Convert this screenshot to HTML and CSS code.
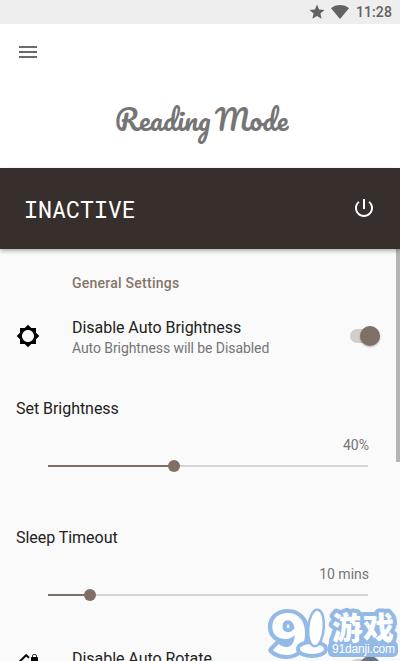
FILE: index.html
```html
<!DOCTYPE html>
<html lang="en">
<head>
    <meta charset="UTF-8">
    <meta name="viewport" content="width=device-width, initial-scale=1.0">
    <title>Reading Mode</title>
    <link rel="stylesheet" href="styles.css">
</head>
<body>
    <div class="status-bar">
        <svg class="star" viewBox="0 0 24 24"><path d="M12 17.27L18.18 21l-1.64-7.03L22 9.24l-7.19-.61L12 2 9.19 8.63 2 9.24l5.46 4.73L5.82 21z"/></svg>
        <svg class="wifi" viewBox="0 0 18 14"><path d="M0 3.2C5-1 13-1 18 3.2L9 14z"/></svg>
        <span>11:28</span>
    </div>

    <header>
        <svg class="menu" viewBox="0 0 24 24"><path d="M3 18h18v-2H3v2zm0-5h18v-2H3v2zm0-7v2h18V6H3z"/></svg>
        <h1>Reading Mode</h1>
    </header>

    <div class="mode-bar">
        <span class="mode">INACTIVE</span>
        <svg class="power" viewBox="0 0 24 24"><path d="M13 3h-2v10h2V3zm4.83 2.17l-1.42 1.42C17.99 7.86 19 9.81 19 12c0 3.87-3.13 7-7 7s-7-3.13-7-7c0-2.19 1.01-4.14 2.58-5.42L6.17 5.17C4.23 6.82 3 9.26 3 12c0 4.97 4.03 9 9 9s9-4.03 9-9c0-2.74-1.23-5.18-3.17-6.83z"/></svg>
    </div>

    <main>
        <h2>General Settings</h2>

        <div class="setting">
            <svg class="icon" viewBox="0 0 24 24"><path d="M20 15.31L23.31 12 20 8.69V4h-4.69L12 .69 8.69 4H4v4.69L.69 12 4 15.31V20h4.69L12 23.31 15.31 20H20v-4.69zM12 18c-3.31 0-6-2.69-6-6s2.69-6 6-6 6 2.69 6 6-2.69 6-6 6z"/></svg>
            <div class="label">
                <div class="title">Disable Auto Brightness</div>
                <div class="summary">Auto Brightness will be Disabled</div>
            </div>
            <div class="switch"><div class="thumb"></div></div>
        </div>

        <div class="slider-setting">
            <div class="title">Set Brightness</div>
            <div class="value">40%</div>
            <div class="slider">
                <div class="fill" style="width: 126px"></div>
                <div class="knob"></div>
            </div>
        </div>

        <div class="slider-setting">
            <div class="title">Sleep Timeout</div>
            <div class="value">10 mins</div>
            <div class="slider">
                <div class="fill" style="width: 42px"></div>
                <div class="knob"></div>
            </div>
        </div>

        <div class="setting rotate">
            <svg class="icon" viewBox="0 0 24 24"><path d="M23.25 12.77l-2.57-2.57-1.41 1.41 2.22 2.22-5.66 5.66L4.51 8.17l5.66-5.66 2.1 2.1 1.41-1.41L11.23.75c-.59-.59-1.54-.59-2.12 0L2.75 7.11c-.59.59-.59 1.54 0 2.12l12.02 12.02c.59.59 1.54.59 2.12 0l6.36-6.36c.59-.59.59-1.54 0-2.12zM8.47 20.48C5.2 18.94 2.86 15.76 2.5 12H1c.51 6.16 5.66 11 11.95 11l.66-.03-3.81-3.82-1.33 1.33zM16 9h5c.55 0 1-.45 1-1V4c0-.55-.45-1-1-1v-.5C21 1.12 19.88 0 18.5 0S16 1.12 16 2.5V3c-.55 0-1 .45-1 1v4c0 .55.45 1 1 1zm.8-6.5c0-.94.76-1.7 1.7-1.7s1.7.76 1.7 1.7V3h-3.4v-.5z"/></svg>
            <div class="label">
                <div class="title">Disable Auto Rotate</div>
            </div>
            <div class="switch"><div class="thumb"></div></div>
        </div>

        <div class="scrollbar"></div>
    </main>

    <!-- Site badge -->
    <svg class="badge" viewBox="0 0 138 56">
        <rect class="plate" x="66" y="36" width="70" height="16" rx="5"/>
        <text class="nine" x="8" y="49" textLength="38" lengthAdjust="spacingAndGlyphs">9</text>
        <ellipse class="one" cx="50" cy="44" rx="12" ry="5"/>
        <ellipse class="one stem" cx="54" cy="23" rx="6.5" ry="17" transform="rotate(5 54 23)"/>
        <text class="site" x="70" y="34" textLength="62">游戏</text>
        <text class="url" x="70" y="48" textLength="63">91danji.com</text>
        <path class="thumb-edge" d="M101 56a10 10 0 0 1 15 0z"/>
    </svg>
</body>
</html>
```
FILE: styles.css
```css
* {
    box-sizing: border-box;
}
body {
    margin: 0;
    height: 661px;
    overflow: hidden;
    position: relative;
    display: flex;
    flex-direction: column;
    font-family: Roboto, sans-serif;
    background-color: #fafafa;
    color: #212121;
}
svg {
    display: block;
    flex: none;
}
.status-bar {
    flex: none;
    height: 24px;
    padding-right: 8px;
    display: flex;
    align-items: center;
    justify-content: flex-end;
    background-color: #eee;
    color: #626262;
    fill: #626262;
    font-size: 14px;
    font-weight: 500;
    letter-spacing: 0.1px;
}
.star {
    width: 18px;
    height: 18px;
    margin-right: 5px;
}
.wifi {
    width: 18px;
    height: 14px;
    margin-right: 7px;
}
header {
    flex: none;
    height: 144px;
    padding: 16px;
    background-color: #fff;
}
.menu {
    width: 24px;
    height: 24px;
    fill: #6b6b6b;
}
h1 {
    margin: 36px 0 0 3px;
    text-align: center;
    font-family: Pacifico, Lato, cursive;
    font-size: 28px;
    font-weight: 400;
    line-height: 40px;
    word-spacing: -3px;
    white-space: nowrap;
    color: #757575;
}
.mode-bar {
    flex: none;
    height: 81px;
    padding: 0 24px 2px;
    display: flex;
    align-items: center;
    justify-content: space-between;
    background-color: #362f2b;
    box-shadow: 0 2px 4px rgba(0, 0, 0, 0.3);
    z-index: 1;
}
.mode {
    font-family: "Roboto Mono", "DejaVu Sans Mono", monospace;
    font-size: 23.3px;
    line-height: 28px;
    padding-top: 2px;
    color: #fff;
}
.power {
    width: 24px;
    height: 24px;
    fill: #fff;
}
main {
    flex: 1;
    min-height: 0;
    position: relative;
    overflow: hidden;
}
h2 {
    margin: 0;
    padding: 24px 0 0 72px;
    font-size: 14px;
    font-weight: 500;
    line-height: 20px;
    letter-spacing: 0.25px;
    color: #85746b;
}
.setting {
    display: flex;
    align-items: center;
    height: 72px;
    margin-top: 7px;
    padding: 0 20px 0 16px;
}
.icon {
    width: 24px;
    height: 24px;
    margin-right: 32px;
}
.label {
    flex: 1;
    padding-top: 3px;
}
.title {
    font-size: 16px;
    line-height: 22px;
    letter-spacing: -0.04px;
}
.summary {
    margin-top: -1px;
    font-size: 14px;
    line-height: 20px;
    letter-spacing: -0.08px;
    color: #757575;
}
.switch {
    width: 30px;
    height: 14px;
    border-radius: 7px;
    display: flex;
    align-items: center;
    justify-content: flex-end;
    background-color: #d3cecb;
}
.thumb {
    width: 20px;
    height: 20px;
    flex: none;
    border-radius: 50%;
    background-color: #806f67;
    box-shadow: 0 1px 2px rgba(0, 0, 0, 0.3);
}
.slider-setting {
    height: 129px;
    padding: 26px 31px 0 16px;
}
.value {
    margin-top: 15px;
    text-align: right;
    font-size: 14px;
    line-height: 20px;
    color: #757575;
}
.slider {
    height: 12px;
    margin: 5px 1px 0 32px;
    display: flex;
    align-items: center;
    background: linear-gradient(#d4d4d4, #d4d4d4) center / 100% 2px no-repeat;
}
.fill {
    height: 2px;
    background-color: #806f67;
}
.knob {
    width: 12px;
    height: 12px;
    margin-left: -6px;
    border-radius: 50%;
    background-color: #806f67;
}
.rotate {
    align-items: flex-start;
    margin-top: 0;
    padding-top: 15px;
}
.rotate .icon {
    margin-top: 9px;
}
.rotate .switch {
    margin-top: 14px;
}
.scrollbar {
    position: absolute;
    top: 0;
    right: 0;
    width: 4px;
    height: 213px;
    background-color: #b4b4b4;
}
.badge {
    position: absolute;
    left: 262px;
    top: 605px;
    width: 138px;
    height: 56px;
}
.plate {
    fill: #93b9e6;
}
.nine,
.one,
.site {
    fill: #fff;
    stroke: #93b9e6;
    stroke-width: 8px;
    stroke-linejoin: round;
    paint-order: stroke;
}
.nine {
    font-family: "Noto Sans CJK SC", sans-serif;
    font-size: 55px;
    font-weight: 900;
}
.stem {
    stroke-width: 5px;
}
.site {
    font-family: "Noto Sans CJK SC", sans-serif;
    font-size: 31px;
    font-weight: 900;
}
.url {
    font-family: "Liberation Sans", sans-serif;
    font-size: 12px;
    fill: #fff;
}
.thumb-edge {
    fill: #66748a;
}
```
